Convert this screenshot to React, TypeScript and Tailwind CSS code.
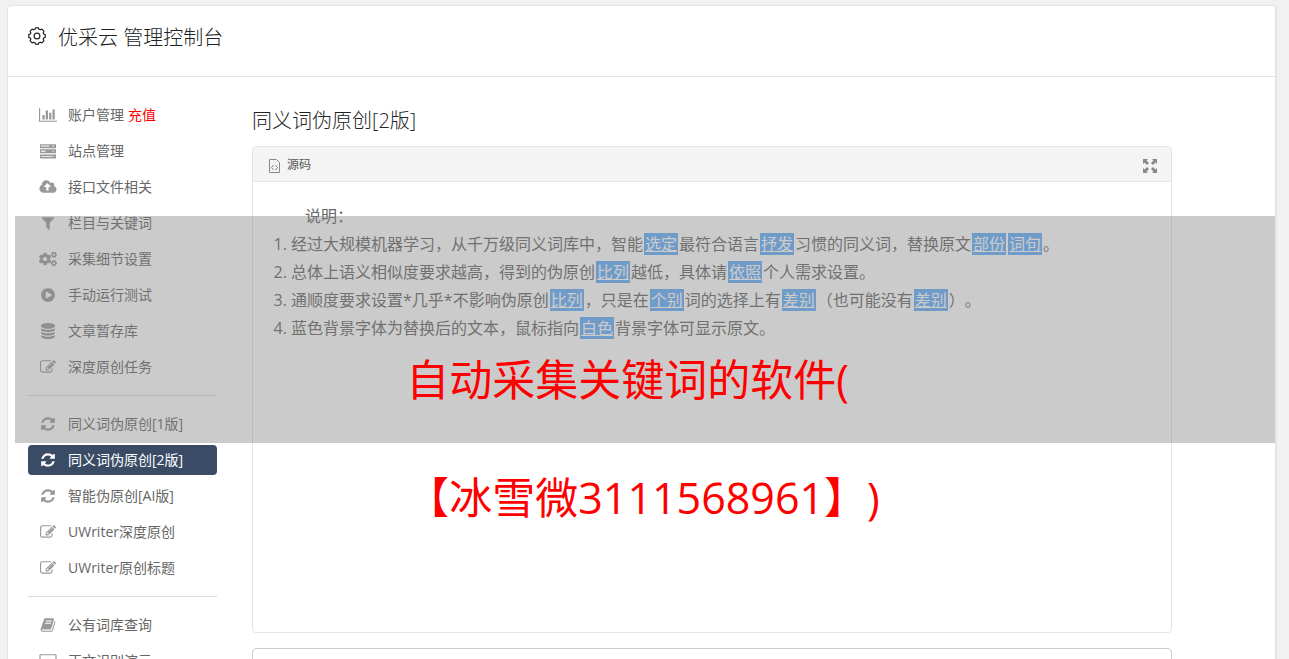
import type { ReactNode } from "react";
import { FaCogs } from "react-icons/fa";

interface IconShape {
  viewBox: string;
  path: string;
}

const SQUARE = "0 0 1792 1792";

const icons: Record<string, IconShape> = {
  chart: {
    viewBox: "0 0 2048 1792",
    path: "M640 896v512h-256v-512h256zm384-512v1024h-256v-1024h256zm1024 1152v128h-2048v-1536h128v1408h1920zm-640-896v768h-256v-768h256zm384-384v1152h-256v-1152h256z",
  },
  server: {
    viewBox: SQUARE,
    path: "M0 128h1792v448h-1792zM128 290v110h900v-110zM1400 290v120h130v-120zM0 704h1792v448h-1792zM128 866v110h500v-110zM1400 866v120h130v-120zM0 1280h1792v448h-1792zM128 1442v110h1200v-110zM1400 1442v120h130v-120z",
  },
  upload: {
    viewBox: "0 0 1920 1792",
    path: "M1280 864q0-14-9-23l-352-352q-9-9-23-9t-23 9l-351 351q-10 12-10 24 0 14 9 23t23 9h224v352q0 13 9.5 22.5t22.5 9.5h192q13 0 22.5-9.5t9.5-22.5v-352h224q13 0 22.5-9.5t9.5-22.5zm640 288q0 159-112.5 271.5t-271.5 112.5h-1088q-185 0-316.5-131.5t-131.5-316.5q0-130 70-240t188-165q-2-30-2-43 0-212 150-362t362-150q156 0 285.5 87t188.5 231q71-62 166-62 106 0 181 75t75 181q0 76-41 138 130 31 213.5 135.5t83.5 238.5z",
  },
  filter: {
    viewBox: SQUARE,
    path: "M1595 295q17 41-14 70l-493 493v742q0 42-39 59-13 5-25 5-27 0-45-19l-256-256q-19-19-19-45v-486l-493-493q-31-29-14-70 17-39 59-39h1280q42 0 59 39z",
  },
  play: {
    viewBox: SQUARE,
    path: "M896 128q209 0 385.5 103t279.5 279.5 103 385.5-103 385.5-279.5 279.5-385.5 103-385.5-103-279.5-279.5-103-385.5 103-385.5 279.5-279.5 385.5-103zm384 823q32-18 32-55t-32-55l-544-320q-31-19-64-1-32 19-32 56v640q0 37 32 56 16 8 32 8 17 0 32-9z",
  },
  database: {
    viewBox: SQUARE,
    path: "M896 768q237 0 443-43t325-127v170q0 69-103 128t-280 93.5-385 34.5-385-34.5-280-93.5-103-128v-170q119 84 325 127t443 43zm0 768q237 0 443-43t325-127v170q0 69-103 128t-280 93.5-385 34.5-385-34.5-280-93.5-103-128v-170q119 84 325 127t443 43zm0-384q237 0 443-43t325-127v170q0 69-103 128t-280 93.5-385 34.5-385-34.5-280-93.5-103-128v-170q119 84 325 127t443 43zm0-1152q208 0 385 34.5t280 93.5 103 128v128q0 69-103 128t-280 93.5-385 34.5-385-34.5-280-93.5-103-128v-128q0-69 103-128t280-93.5 385-34.5z",
  },
  edit: {
    viewBox: SQUARE,
    path: "M888 1184l116-116-152-152-116 116v56h96v96h56zm440-720q-16-16-33 1l-350 350q-17 17-1 33t33-1l350-350q17-17 1-33zm80 594v190q0 119-84.5 203.5t-203.5 84.5h-832q-119 0-203.5-84.5t-84.5-203.5v-832q0-119 84.5-203.5t203.5-84.5h832q63 0 117 25 15 7 18 23 3 17-9 29l-49 49q-14 14-32 8-23-6-45-6h-832q-66 0-113 47t-47 113v832q0 66 47 113t113 47h832q66 0 113-47t47-113v-126q0-13 9-22l64-64q15-15 35-7t20 29zm-96-738l288 288-672 672h-288v-288zm444 132l-92 92-288-288 92-92q28-28 68-28t68 28l152 152q28 28 28 68t-28 68z",
  },
  refresh: {
    viewBox: SQUARE,
    path: "M1639 1056q0 5-1 7-64 268-268 434.5t-478 166.5q-146 0-282.5-55t-243.5-157l-129 129q-19 19-45 19t-45-19-19-45v-448q0-26 19-45t45-19h448q26 0 45 19t19 45-19 45l-137 137q71 66 161 102t187 36q134 0 250-65t186-179q11-17 53-117 8-23 30-23h192q13 0 22.5 9.5t9.5 22.5zm25-800v448q0 26-19 45t-45 19h-448q-26 0-45-19t-19-45 19-45l138-138q-148-137-349-137-134 0-250 65t-186 179q-11 17-53 117-8 23-30 23h-199q-13 0-22.5-9.5t-9.5-22.5v-7q65-268 270-434.5t480-166.5q146 0 284 55.5t245 156.5l130-129q19-19 45-19t45 19 19 45z",
  },
  book: {
    viewBox: SQUARE,
    path: "M1703 478q40 57 18 129l-275 906q-19 64-76.5 107.5t-122.5 43.5h-923q-77 0-148.5-53.5t-99.5-131.5q-24-67-2-127 0-4 3-27t4-37q1-8-3-21.5t-3-19.5q2-11 8-21t16.5-23.5 16.5-23.5q23-38 45-91.5t30-91.5q3-10 .5-30t-.5-28q3-11 17-28t17-23q21-36 42-92t25-90q1-9-2.5-32t.5-28q4-13 22-30.5t22-22.5q19-26 42.5-84.5t27.5-96.5q1-8-3-25.5t-2-26.5q2-8 9-18t18-23 17-21q8-12 16.5-30.5t15-35 16-36 19.5-32 26.5-23.5 36-11.5 47.5 5.5l-1 3q38-9 51-9h761q74 0 114 56t18 130l-274 906q-36 119-71.5 153.5t-128.5 34.5h-869q-27 0-38 15-11 16-1 43 24 70 144 70h923q29 0 56-15.5t35-41.5l300-987q7-22 5-57 38 15 59 43zm-1064 2q-4 13 2 22.5t20 9.5h608q13 0 25.5-9.5t16.5-22.5l21-64q4-13-2-22.5t-20-9.5h-608q-13 0-25.5 9.5t-16.5 22.5zm-83 256q-4 13 2 22.5t20 9.5h608q13 0 25.5-9.5t16.5-22.5l21-64q4-13-2-22.5t-20-9.5h-608q-13 0-25.5 9.5t-16.5 22.5z",
  },
  desktop: {
    viewBox: "0 0 1920 1792",
    path: "M100 128h1720q100 0 100 100v1100q0 100-100 100h-620v120h160v116h-800v-116h160v-120h-620q-100 0-100-100v-1100q0-100 100-100zM128 256v900h1664v-900z",
  },
};

function NavIcon({ name }: { name: string }) {
  if (name === "cogs") return <FaCogs size={18} />;
  const { viewBox, path } = icons[name];
  return (
    <svg className="h-4 w-[18px]" viewBox={viewBox} fill="currentColor" fillRule="evenodd" aria-hidden="true">
      <path d={path} />
    </svg>
  );
}

function GearIcon() {
  return (
    <svg className="mb-1 h-[18px] w-[18px]" viewBox="0 0 18 18" fill="none" stroke="currentColor" aria-hidden="true">
      <path
        strokeWidth="1.2"
        strokeLinejoin="round"
        d="M7.600.8h2.800l.6 1.500 1.300.5 1.500-.7 2.100 2.100-.7 1.500.5 1.300 1.500.6v2.800l-1.500.6-.5 1.300.7 1.500-2.100 2.100-1.500-.7-1.300.5-.6 1.500H7.600L7 15.700l-1.300-.5-1.500.7-2.100-2.100.7-1.500-.5-1.300-1.500-.6V7.600L2.300 7l.5-1.300-.7-1.500 2.100-2.100 1.500.7L7 2.300z"
      />
      <circle cx="9" cy="9" r="2.900" strokeWidth="1.200" />
    </svg>
  );
}

interface NavEntry {
  icon: string;
  label: string;
  note?: string;
  active?: boolean;
}

const groups: NavEntry[][] = [
  [
    { icon: "chart", label: "账户管理", note: "充值" },
    { icon: "server", label: "站点管理" },
    { icon: "upload", label: "接口文件相关" },
    { icon: "filter", label: "栏目与关键词" },
    { icon: "cogs", label: "采集细节设置" },
    { icon: "play", label: "手动运行测试" },
    { icon: "database", label: "文章暂存库" },
    { icon: "edit", label: "深度原创任务" },
  ],
  [
    { icon: "refresh", label: "同义词伪原创[1版]" },
    { icon: "refresh", label: "同义词伪原创[2版]", active: true },
    { icon: "refresh", label: "智能伪原创[AI版]" },
    { icon: "edit", label: "UWriter深度原创" },
    { icon: "edit", label: "UWriter原创标题" },
  ],
  [
    { icon: "book", label: "公有词库查询" },
    { icon: "desktop", label: "正文识别演示" },
  ],
];

function NavItem({ icon, label, note, active }: NavEntry) {
  return (
    <li>
      <a
        href="#"
        aria-current={active ? "page" : undefined}
        className={`flex h-[30px] items-center rounded pl-[11px] text-sm whitespace-nowrap ${
          active ? "bg-[#3a4b66] text-white" : "text-[#666]"
        }`}
      >
        <span className={`mr-[11px] flex w-[18px] justify-center ${active ? "text-white" : "text-[#999]"}`}>
          <NavIcon name={icon} />
        </span>
        {label}
        {note && <span className="ml-1 text-[#f00]">{note}</span>}
      </a>
    </li>
  );
}

function Sidebar() {
  return (
    <nav className="w-[189px] shrink-0">
      {groups.map((items, i) => (
        <ul
          key={i}
          className={`flex flex-col gap-1.5 ${i > 0 ? "mt-[13px] border-t border-[#ddd] pt-[13px]" : ""}`}
        >
          {items.map((item) => (
            <NavItem key={item.label} {...item} />
          ))}
        </ul>
      ))}
    </nav>
  );
}

// A replaced synonym
function Mark({ children }: { children: ReactNode }) {
  return <u className="mx-px bg-[#64aefc] px-px text-white">{children}</u>;
}

function SourcePanel() {
  return (
    <section className="rounded border border-[#e4e4e4]">
      <header className="flex h-[35px] items-center rounded-t border-b border-[#e4e4e4] bg-[#f4f4f4] pr-[14px] pl-4">
        <svg className="mt-1 mr-[7px] h-[14px] w-[11px]" viewBox="0 0 11 14" fill="none" stroke="#888" aria-hidden="true">
          <path d="M.5.5H7.500L10.500 3.500V13.500H.5zM4.500 6L2.500 8.500L4.500 11M6.500 6L8.500 8.500L6.500 11" />
        </svg>
        <h3 className="pt-0.5 text-xs text-[#555]">源码</h3>
        <button type="button" aria-label="全屏" className="mt-1 ml-auto text-[#888]">
          <svg className="h-[14px] w-[14px]" viewBox="0 0 14 14" fill="currentColor" aria-hidden="true">
            <path d="M0 0h5L3.500 1.500 6 4 4 6 1.500 3.500 0 5zM14 0v5l-1.500-1.500L10 6 8 4l2.500-2.500L9 0zM0 14V9l1.500 1.500L4 8l2 2-2.500 2.500L5 14zM14 14H9l1.500-1.500L8 10l2-2 2.500 2.500L14 9z" />
          </svg>
        </button>
      </header>
      <div className="min-h-[450px] px-5 pt-5 text-base leading-7 text-[#666]">
        <p className="indent-8">说明：</p>
        <ol className="list-decimal pl-[18px]">
          <li>
            经过大规模机器学习，从千万级同义词库中，智能<Mark>选定</Mark>最符合语言<Mark>抒发</Mark>
            习惯的同义词，替换原文<Mark>部份</Mark>
            <Mark>词句</Mark>。
          </li>
          <li>
            总体上语义相似度要求越高，得到的伪原创<Mark>比列</Mark>越低，具体请<Mark>依照</Mark>
            个人需求设置。
          </li>
          <li>
            通顺度要求设置*几乎*不影响伪原创<Mark>比列</Mark>，只是在<Mark>个别</Mark>词的选择上有
            <Mark>差别</Mark>（也可能没有<Mark>差别</Mark>）。
          </li>
          <li>
            蓝色背景字体为替换后的文本，鼠标指向<Mark>白色</Mark>背景字体可显示原文。
          </li>
        </ol>
      </div>
    </section>
  );
}

function Banner() {
  return (
    <div className="pointer-events-none absolute top-[216px] right-[14px] left-[15px] flex h-[227px] justify-center bg-[#808080]/41 pt-[105px] pr-1">
      <p className="text-[43px] leading-[118px] whitespace-nowrap text-[#f00]">
        自动采集关键词的软件(
        <br />
        【冰雪微3111568961】)
      </p>
    </div>
  );
}

export default function App() {
  return (
    <div className="relative h-screen overflow-hidden bg-[#f1f1f1] pt-[5px] pr-3 pl-[7px] font-['Open_Sans','Noto_Sans_CJK_SC',sans-serif] [text-spacing-trim:space-all]">
      <div className="min-h-full rounded-t border border-r-2 border-[#e4e4e4] bg-white">
        <header className="flex h-[71px] items-center border-b border-[#e4e4e4] pb-1.5 pl-5 text-[#222]">
          <GearIcon />
          <h1 className="ml-3 text-xl font-light">优采云 管理控制台</h1>
        </header>
        <div className="flex pt-[23px] pl-5">
          <Sidebar />
          <main className="mr-[103px] ml-[35px] min-w-0 flex-1">
            <h2 className="pt-[7px] pb-[11px] text-xl font-light text-[#222]">同义词伪原创[2版]</h2>
            <SourcePanel />
            <textarea
              aria-label="原文"
              className="mt-[15px] block h-40 w-full resize-none rounded border border-[#ccc] bg-white p-3"
            />
          </main>
        </div>
      </div>
      <Banner />
    </div>
  );
}
